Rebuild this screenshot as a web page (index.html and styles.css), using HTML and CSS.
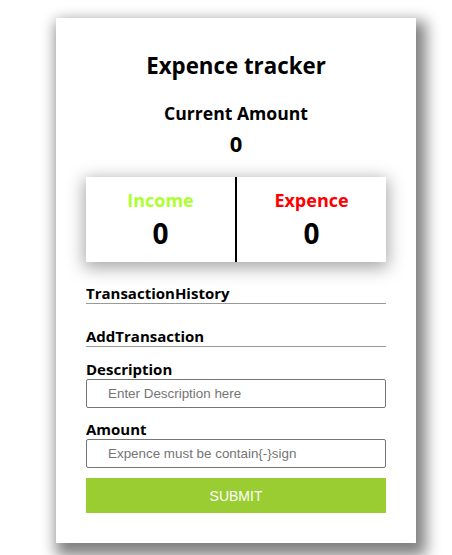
FILE: index.html
```
<!DOCTYPE html>
<html>
<head>
<meta charset="utf-8">
<link rel="stylesheet" href="styles.css">
</head>
<body>
<div class="page">
  <div class="card">
    <h1 class="title">Expence tracker</h1>
    <h2 class="current-label">Current Amount</h2>
    <div class="current-value">0</div>
    <div class="summary">
      <div class="summary-col">
        <div class="summary-label income">Income</div>
        <div class="summary-value">0</div>
      </div>
      <div class="summary-divider"></div>
      <div class="summary-col">
        <div class="summary-label expence">Expence</div>
        <div class="summary-value">0</div>
      </div>
    </div>
    <h3 class="section-title history">TransactionHistory</h3>
    <h3 class="section-title add">AddTransaction</h3>
    <form class="form">
      <label class="field-label">Description</label>
      <input class="field-input" type="text" placeholder="Enter Description here">
      <label class="field-label amount">Amount</label>
      <input class="field-input" type="text" placeholder="Expence must be contain{-}sign">
      <button class="submit" type="button">SUBMIT</button>
    </form>
  </div>
</div>
</body>
</html>
```
FILE: styles.css
```
html, body {
  margin: 0;
  padding: 0;
  background: #fff;
}
body {
  font-family: "Open Sans", "Noto Sans", sans-serif;
  color: #000;
  overflow: hidden;
}
.page {
  padding: 18px 0 0 56px;
  height: 555px;
  box-sizing: border-box;
}
.card {
  width: 360px;
  height: 525px;
  box-sizing: border-box;
  background: #fff;
  padding: 32px 30px 0;
  box-shadow: 5px 8px 14px 5px #808080;
}
.title {
  margin: 0;
  text-align: center;
  font-size: 22.3px;
  font-weight: 700;
  line-height: 32px;
}
.current-label {
  margin: 19px 0 0;
  text-align: center;
  font-size: 17.6px;
  font-weight: 700;
  line-height: 24px;
}
.current-value {
  text-align: center;
  font-size: 22px;
  font-weight: 700;
  line-height: 36px;
}
.summary {
  margin-top: 16px;
  display: flex;
  height: 85px;
  background: #fff;
  box-shadow: 0 4px 16px 2px rgba(0,0,0,0.35);
}
.summary-col {
  flex: 1;
  display: flex;
  flex-direction: column;
  align-items: center;
  padding-top: 12px;
}
.summary-divider {
  width: 2px;
  background: #000;
}
.summary-label {
  font-size: 18px;
  font-weight: 700;
  line-height: 22px;
}
.income { color: #adff2f; }
.expence { color: #ff0000; }
.summary-value {
  font-size: 28px;
  font-weight: 700;
  line-height: 40px;
  margin-top: 2px;
}
.section-title {
  margin: 0;
  font-size: 15px;
  font-weight: 700;
  line-height: 20px;
  border-bottom: 1px solid #999;
  padding-bottom: 0;
}
.history { margin-top: 21px; }
.add { margin-top: 22px; }
.form {
  display: flex;
  flex-direction: column;
  margin-top: 12px;
}
.field-label {
  font-size: 15px;
  font-weight: 700;
  line-height: 20px;
}
.amount { margin-top: 11px; }
.field-input {
  height: 29px;
  box-sizing: border-box;
  border: 1px solid #767676;
  border-radius: 2px;
  padding: 0 0 0 21px;
  font-family: "Liberation Sans", Arial, sans-serif;
  font-size: 13.4px;
  margin: 0;
}
.field-input::placeholder { color: #757575; }
.submit {
  margin-top: 10px;
  height: 35px;
  border: none;
  background: #9acd32;
  color: #fff;
  font-family: "Liberation Sans", Arial, sans-serif;
  font-size: 14px;
}
```
